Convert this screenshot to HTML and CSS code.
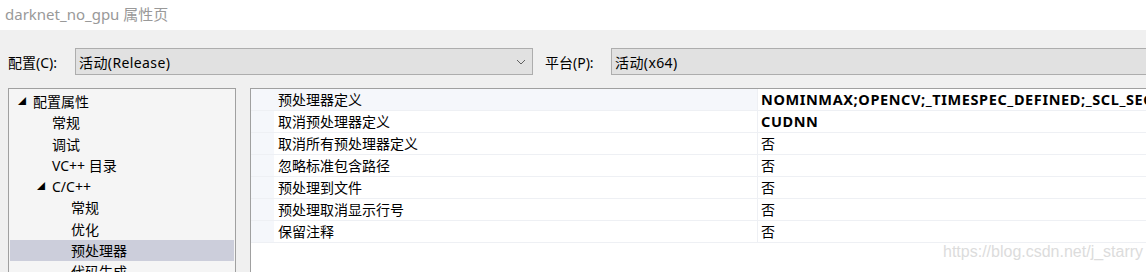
FILE: index.html
```html
<!DOCTYPE html>
<html lang="zh-CN">
<head>
    <meta charset="UTF-8">
    <title>darknet_no_gpu 属性页</title>
    <link rel="stylesheet" href="styles.css">
</head>
<body>
    <div class="titlebar">darknet_no_gpu 属性页</div>

    <div class="dialog">
        <div class="config-row">
            <span class="field-label">配置(C):</span>
            <div class="combo config-combo">
                <span>活动(Release)</span>
                <svg class="chevron" width="10" height="6" viewBox="0 0 10 6">
                    <path d="M1 1 L5 5 L9 1" fill="none" stroke="#606060" stroke-width="1"/>
                </svg>
            </div>
            <span class="field-label platform-label">平台(P):</span>
            <div class="combo platform-combo">
                <span>活动(x64)</span>
            </div>
        </div>

        <div class="panels">
            <ul class="tree">
                <li class="lvl1"><span class="arrow">◢</span>配置属性</li>
                <li class="lvl2">常规</li>
                <li class="lvl2">调试</li>
                <li class="lvl2">VC++ 目录</li>
                <li class="lvl2 open"><span class="arrow">◢</span>C/C++</li>
                <li class="lvl3">常规</li>
                <li class="lvl3">优化</li>
                <li class="lvl3 selected">预处理器</li>
                <li class="lvl3">代码生成</li>
            </ul>

            <div class="grid">
                <div class="prop active">
                    <div class="prop-name">预处理器定义</div>
                    <div class="prop-value bold">NOMINMAX;OPENCV;_TIMESPEC_DEFINED;_SCL_SEC</div>
                </div>
                <div class="prop">
                    <div class="prop-name">取消预处理器定义</div>
                    <div class="prop-value bold">CUDNN</div>
                </div>
                <div class="prop">
                    <div class="prop-name">取消所有预处理器定义</div>
                    <div class="prop-value">否</div>
                </div>
                <div class="prop">
                    <div class="prop-name">忽略标准包含路径</div>
                    <div class="prop-value">否</div>
                </div>
                <div class="prop">
                    <div class="prop-name">预处理到文件</div>
                    <div class="prop-value">否</div>
                </div>
                <div class="prop">
                    <div class="prop-name">预处理取消显示行号</div>
                    <div class="prop-value">否</div>
                </div>
                <div class="prop">
                    <div class="prop-name">保留注释</div>
                    <div class="prop-value">否</div>
                </div>
                <div class="watermark">https://blog.csdn.net/j_starry</div>
            </div>
        </div>
    </div>
</body>
</html>
```

FILE: styles.css
```css
body {
    margin: 0;
    font-family: "Noto Sans", "Noto Sans CJK SC", sans-serif;
    font-size: 14px;
    color: #000;
    background: #f0f0f0;
    overflow: hidden;
}

.titlebar {
    height: 30px;
    line-height: 28px;
    padding-left: 5px;
    background: #fff;
    color: #999;
    font-size: 15px;
}

.dialog {
    padding: 18px 0 0 8px;
}

.config-row {
    display: flex;
    align-items: center;
    height: 27px;
}

.field-label {
    width: 67px;
    flex-shrink: 0;
}

.platform-label {
    margin-left: 12px;
    width: 66px;
}

.combo {
    box-sizing: border-box;
    height: 27px;
    display: flex;
    align-items: center;
    padding-left: 3px;
    background: #e1e1e1;
    border: 1px solid #adadad;
    letter-spacing: 0.4px;
}

.config-combo {
    width: 458px;
    flex-shrink: 0;
    justify-content: space-between;
}

.chevron {
    margin-right: 6px;
}

.platform-combo {
    flex: 1;
    margin-right: -4px;
}

.panels {
    display: flex;
    gap: 14px;
    margin-top: 13px;
    height: 190px;
    overflow: hidden;
}

.tree {
    list-style: none;
    margin: 0;
    padding: 2px 1px 0 1px;
    width: 224px;
    flex-shrink: 0;
    background: #f5f5f5;
    border: 1px solid #a0a0a0;
    border-bottom: none;
}

.tree li {
    height: 21.3px;
    line-height: 21px;
    white-space: nowrap;
}

.arrow {
    display: inline-block;
    width: 15px;
    font-size: 8px;
    vertical-align: top;
    transform: translateY(-1px);
}

.lvl1 {
    padding-left: 8px;
}

.lvl2 {
    padding-left: 42px;
}

.lvl2.open {
    padding-left: 27px;
}

.lvl3 {
    padding-left: 61px;
}

.selected {
    background: #cccedb;
}

.grid {
    position: relative;
    flex: 1;
    min-width: 0;
    margin-right: -4px;
    background: #fff;
    border: 1px solid #a0a0a0;
    border-bottom: none;
    overflow: hidden;
}

.prop {
    display: flex;
    height: 22px;
    border-bottom: 1px solid #eef0f4;
    box-sizing: border-box;
    background: #f5f7fb;
}

.prop-name {
    margin-left: 23px;
    width: 479px;
    flex-shrink: 0;
    padding-left: 4px;
    line-height: 21px;
    background: #fff;
    border-right: 1px solid #eef0f4;
    white-space: nowrap;
}

.prop.active .prop-name {
    background: #f5f7fb;
}

.prop-value {
    flex: 1;
    padding-left: 3px;
    line-height: 21px;
    background: #fff;
    white-space: nowrap;
    overflow: hidden;
}

.bold {
    font-weight: bold;
    font-size: 14.5px;
    letter-spacing: 0.6px;
}

.watermark {
    position: absolute;
    left: 692px;
    top: 154px;
    font-family: "Liberation Sans", Arial, sans-serif;
    font-size: 16px;
    color: #dcdcdc;
}
```
